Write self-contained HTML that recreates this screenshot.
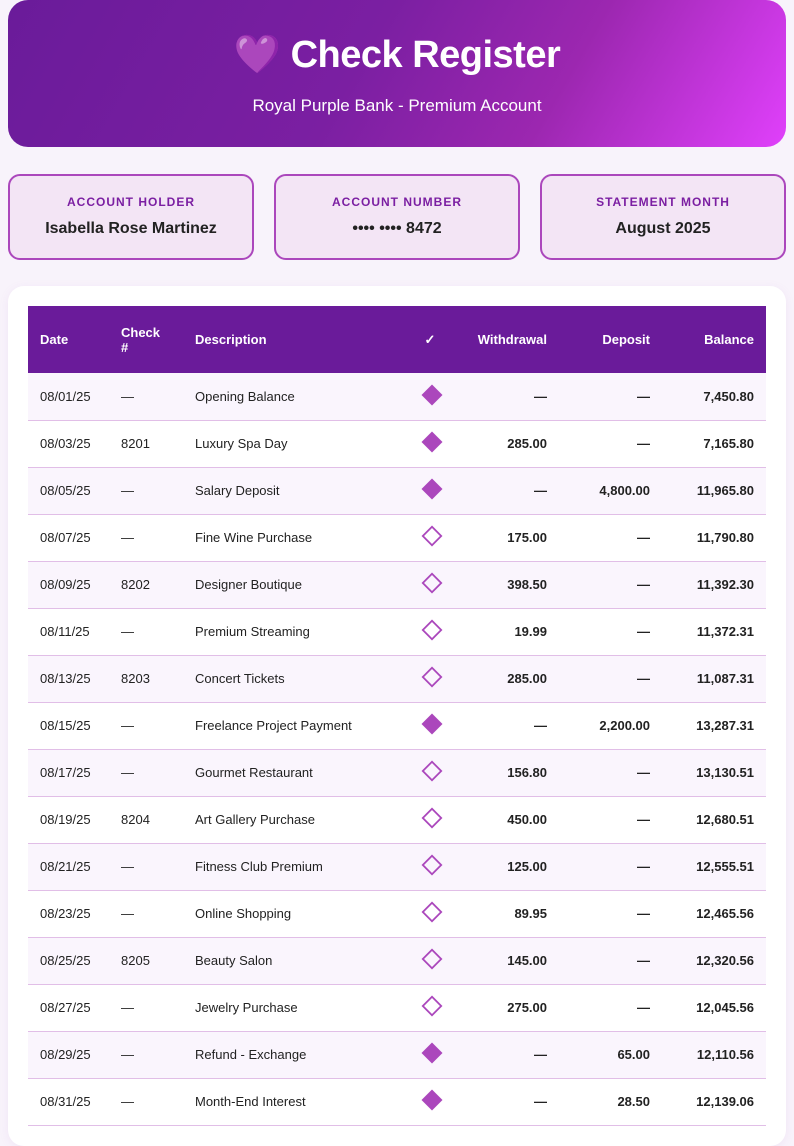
<!DOCTYPE html>
<html><head><meta charset="utf-8"><style>
*{box-sizing:border-box;margin:0;padding:0}
body{width:794px;height:1123px;overflow:hidden;background:#f8f3fb;font-family:"Liberation Sans",Arial,sans-serif;color:#222}
.hdr{position:absolute;left:8px;top:0;width:778px;height:147px;border-radius:20px;background:linear-gradient(120deg,#6a1b9a 0%,#7b1fa2 45%,#9c27b0 70%,#e040fb 100%);color:#fff;text-align:center}
.hdr h1{position:absolute;top:33px;left:0;right:0;font-size:38px;font-weight:bold;letter-spacing:-0.5px}
.hdr p{position:absolute;top:96px;left:0;right:0;font-size:17px}
.card{position:absolute;top:174px;width:246px;height:86px;border:2px solid #ab47bc;border-radius:12px;background:#f3e5f5;text-align:center}
.card .l{margin-top:19px;font-size:12px;font-weight:bold;letter-spacing:1px;color:#7b1fa2}
.card .v{margin-top:11px;font-size:16px;font-weight:bold;color:#222}
.wrap{position:absolute;left:8px;top:286px;width:778px;height:860px;background:#fff;border-radius:16px;box-shadow:0 2px 10px rgba(150,80,180,.08)}
table{position:absolute;left:20px;top:20px;width:738px;border-collapse:collapse;font-size:13px}
th{background:#6a1b9a;color:#fff;height:67px;font-weight:bold;text-align:left;padding:0 12px;font-size:13px}
td{height:47px;padding:0 12px;border-bottom:1px solid #e1bee7}
tr:nth-child(even) td{background:#faf5fd}
.r{text-align:right}.b{font-weight:bold}.c{text-align:center;padding:0}
.c svg{display:block;margin:-3px auto 0;position:relative;left:2px}
</style></head><body>
<svg width="0" height="0" style="position:absolute"><defs>
<symbol id="f" viewBox="0 0 24 24"><path d="M12 1.5L22.5 12 12 22.5 1.5 12Z" fill="#ab47bc"/></symbol>
<symbol id="o" viewBox="0 0 24 24"><path d="M12 2.8L21.2 12 12 21.2 2.8 12Z" fill="none" stroke="#ab47bc" stroke-width="1.8"/></symbol>
</defs></svg>
<div class="hdr"><h1>💜 Check Register</h1><p>Royal Purple Bank - Premium Account</p></div>
<div class="card" style="left:8px"><div class="l">ACCOUNT HOLDER</div><div class="v">Isabella Rose Martinez</div></div>
<div class="card" style="left:274px"><div class="l">ACCOUNT NUMBER</div><div class="v">•••• •••• 8472</div></div>
<div class="card" style="left:540px"><div class="l">STATEMENT MONTH</div><div class="v">August 2025</div></div>
<div class="wrap"><table>
<colgroup><col style="width:81px"><col style="width:74px"><col style="width:212px"><col style="width:70px"><col style="width:94px"><col style="width:103px"><col style="width:104px"></colgroup>
<tr><th>Date</th><th>Check<br>#</th><th>Description</th><th class="c">✓</th><th class="r">Withdrawal</th><th class="r">Deposit</th><th class="r">Balance</th></tr>
<tr><td>08/01/25</td><td>—</td><td>Opening Balance</td><td class="c"><svg width="24" height="24"><use href="#f"/></svg></td><td class="r b">—</td><td class="r b">—</td><td class="r b">7,450.80</td></tr>
<tr><td>08/03/25</td><td>8201</td><td>Luxury Spa Day</td><td class="c"><svg width="24" height="24"><use href="#f"/></svg></td><td class="r b">285.00</td><td class="r b">—</td><td class="r b">7,165.80</td></tr>
<tr><td>08/05/25</td><td>—</td><td>Salary Deposit</td><td class="c"><svg width="24" height="24"><use href="#f"/></svg></td><td class="r b">—</td><td class="r b">4,800.00</td><td class="r b">11,965.80</td></tr>
<tr><td>08/07/25</td><td>—</td><td>Fine Wine Purchase</td><td class="c"><svg width="24" height="24"><use href="#o"/></svg></td><td class="r b">175.00</td><td class="r b">—</td><td class="r b">11,790.80</td></tr>
<tr><td>08/09/25</td><td>8202</td><td>Designer Boutique</td><td class="c"><svg width="24" height="24"><use href="#o"/></svg></td><td class="r b">398.50</td><td class="r b">—</td><td class="r b">11,392.30</td></tr>
<tr><td>08/11/25</td><td>—</td><td>Premium Streaming</td><td class="c"><svg width="24" height="24"><use href="#o"/></svg></td><td class="r b">19.99</td><td class="r b">—</td><td class="r b">11,372.31</td></tr>
<tr><td>08/13/25</td><td>8203</td><td>Concert Tickets</td><td class="c"><svg width="24" height="24"><use href="#o"/></svg></td><td class="r b">285.00</td><td class="r b">—</td><td class="r b">11,087.31</td></tr>
<tr><td>08/15/25</td><td>—</td><td>Freelance Project Payment</td><td class="c"><svg width="24" height="24"><use href="#f"/></svg></td><td class="r b">—</td><td class="r b">2,200.00</td><td class="r b">13,287.31</td></tr>
<tr><td>08/17/25</td><td>—</td><td>Gourmet Restaurant</td><td class="c"><svg width="24" height="24"><use href="#o"/></svg></td><td class="r b">156.80</td><td class="r b">—</td><td class="r b">13,130.51</td></tr>
<tr><td>08/19/25</td><td>8204</td><td>Art Gallery Purchase</td><td class="c"><svg width="24" height="24"><use href="#o"/></svg></td><td class="r b">450.00</td><td class="r b">—</td><td class="r b">12,680.51</td></tr>
<tr><td>08/21/25</td><td>—</td><td>Fitness Club Premium</td><td class="c"><svg width="24" height="24"><use href="#o"/></svg></td><td class="r b">125.00</td><td class="r b">—</td><td class="r b">12,555.51</td></tr>
<tr><td>08/23/25</td><td>—</td><td>Online Shopping</td><td class="c"><svg width="24" height="24"><use href="#o"/></svg></td><td class="r b">89.95</td><td class="r b">—</td><td class="r b">12,465.56</td></tr>
<tr><td>08/25/25</td><td>8205</td><td>Beauty Salon</td><td class="c"><svg width="24" height="24"><use href="#o"/></svg></td><td class="r b">145.00</td><td class="r b">—</td><td class="r b">12,320.56</td></tr>
<tr><td>08/27/25</td><td>—</td><td>Jewelry Purchase</td><td class="c"><svg width="24" height="24"><use href="#o"/></svg></td><td class="r b">275.00</td><td class="r b">—</td><td class="r b">12,045.56</td></tr>
<tr><td>08/29/25</td><td>—</td><td>Refund - Exchange</td><td class="c"><svg width="24" height="24"><use href="#f"/></svg></td><td class="r b">—</td><td class="r b">65.00</td><td class="r b">12,110.56</td></tr>
<tr><td>08/31/25</td><td>—</td><td>Month-End Interest</td><td class="c"><svg width="24" height="24"><use href="#f"/></svg></td><td class="r b">—</td><td class="r b">28.50</td><td class="r b">12,139.06</td></tr>
</table></div>
</body></html>
